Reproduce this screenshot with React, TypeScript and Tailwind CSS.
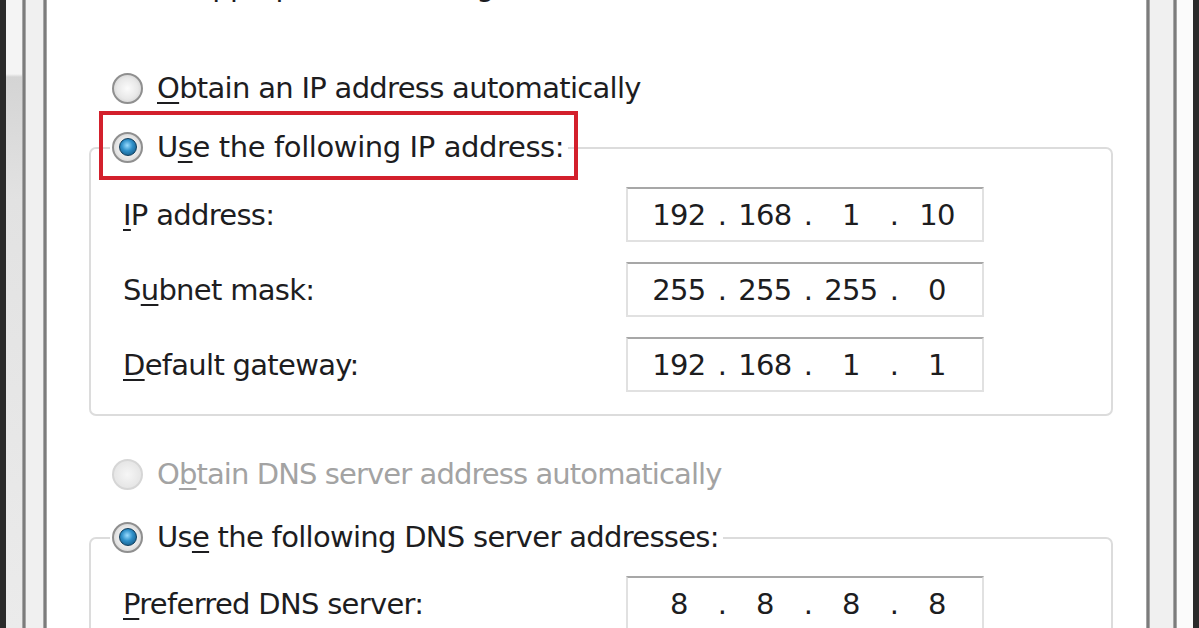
import React, { Fragment } from "react";

function Radio({ checked, disabled }: { checked?: boolean; disabled?: boolean }) {
  if (disabled) {
    return (
      <span className="w-[31px] h-[31px] shrink-0 rounded-full border-2 border-[#d6d6d6] bg-[radial-gradient(circle_at_50%_50%,#f6f6f6_0%,#e6e6e6_70%,#dadada_100%)]" />
    );
  }
  return (
    <span className="w-[31px] h-[31px] shrink-0 rounded-full border-2 border-[#8f8f8f] bg-[radial-gradient(circle_at_50%_50%,#fbfbfb_0%,#e8e8e8_55%,#c2c2c2_100%)] flex items-center justify-center">
      {checked && (
        <span className="w-[18px] h-[18px] rounded-full border border-[#0c3c5c] bg-[radial-gradient(circle_at_45%_40%,#9adcff_0%,#2f90c9_42%,#0d4a73_100%)]" />
      )}
    </span>
  );
}

function U({ children }: { children: React.ReactNode }) {
  return <span className="underline decoration-[2px] underline-offset-[4px]">{children}</span>;
}

function IpBox({ parts }: { parts: string[] }) {
  return (
    <div className="w-[358px] h-[55px] shrink-0 border-2 border-[#e1e1e1] border-t-[#a7a7a7] flex items-center pl-[16px] bg-white">
      {parts.map((p, i) => (
        <Fragment key={i}>
          {i > 0 && <span className="w-[16px] text-center">.</span>}
          <span className="w-[70px] text-center">{p}</span>
        </Fragment>
      ))}
    </div>
  );
}

function FieldRow({ label, parts }: { label: React.ReactNode; parts: string[] }) {
  return (
    <div className="mt-[20px] h-[55px] flex items-center">
      <div className="w-[535px] pl-[32px] whitespace-nowrap">{label}</div>
      <IpBox parts={parts} />
    </div>
  );
}

function Line() {
  return <div className="w-[4px] shrink-0 bg-[linear-gradient(to_right,#bdbdbd,#7c7c7c_35%,#7c7c7c_65%,#bdbdbd)]" />;
}

export default function App() {
  return (
    <div className="w-[1199px] h-[628px] overflow-hidden flex bg-white font-['DejaVu_Sans','Liberation_Sans',sans-serif] text-[29px] tracking-[-0.7px] leading-[36px] text-[#1d1d1f]">
      <div className="w-[6px] shrink-0 bg-[#2a2a2a]" />
      <div className="w-[16px] shrink-0 bg-[linear-gradient(to_bottom,#f4f4f4_0px,#f4f4f4_74px,#d4d4d4_77px,#e2e2e2_200px,#ebebeb_628px)]" />
      <Line />
      <div className="w-[17px] shrink-0 bg-[#f0f0f0]" />
      <Line />

      <main className="w-[1099px] shrink-0 flex flex-col bg-white">
        <div className="-mt-[32px] h-[36px] pl-[48px] whitespace-nowrap">for the appropriate IP settings.</div>

        <div className="mt-[66px] h-[40px] flex items-center pl-[65px] gap-[14px] whitespace-nowrap">
          <Radio />
          <span>
            <U>O</U>btain an IP address automatically
          </span>
        </div>

        <div className="ml-[42px] w-[1024px] mt-[41px] border-2 border-[#dcdcdc] rounded-[7px] pb-[22px]">
          <div className="relative -mt-[22px] ml-[19px] w-fit h-[40px] px-[2px] flex items-center gap-[14px] bg-white whitespace-nowrap">
            <Radio checked />
            <span className="pr-[2px] tracking-[-0.4px]">
              U<U>s</U>e the following IP address:
            </span>
            <div className="absolute -left-[11px] -top-[16px] w-[479px] h-[69px] border-[4px] border-[#d3202c]" />
          </div>
          <FieldRow label={<><U>I</U>P address:</>} parts={["192", "168", "1", "10"]} />
          <FieldRow label={<>S<U>u</U>bnet mask:</>} parts={["255", "255", "255", "0"]} />
          <FieldRow label={<><U>D</U>efault gateway:</>} parts={["192", "168", "1", "1"]} />
        </div>

        <div className="mt-[40px] h-[40px] flex items-center pl-[65px] gap-[14px] whitespace-nowrap text-[#a3a3a3]">
          <Radio disabled />
          <span className="tracking-[-0.9px]">
            O<U>b</U>tain DNS server address automatically
          </span>
        </div>

        <div className="ml-[42px] w-[1024px] mt-[45px] border-2 border-[#dcdcdc] rounded-[7px] pb-[20px]">
          <div className="relative -mt-[22px] ml-[19px] w-fit h-[40px] px-[2px] flex items-center gap-[14px] bg-white whitespace-nowrap">
            <Radio checked />
            <span className="pr-[2px]">
              Us<U>e</U> the following DNS server addresses:
            </span>
          </div>
          <div className="mt-[19px] h-[55px] flex items-center">
            <div className="w-[535px] pl-[32px] whitespace-nowrap">
              <U>P</U>referred DNS server:
            </div>
            <IpBox parts={["8", "8", "8", "8"]} />
          </div>
        </div>
      </main>

      <Line />
      <div className="w-[23px] shrink-0 bg-[#f0f0f0]" />
      <Line />
      <div className="w-[16px] shrink-0 bg-[#fbfbfb]" />
      <div className="w-[6px] shrink-0 bg-[#2a2a2a]" />
    </div>
  );
}
